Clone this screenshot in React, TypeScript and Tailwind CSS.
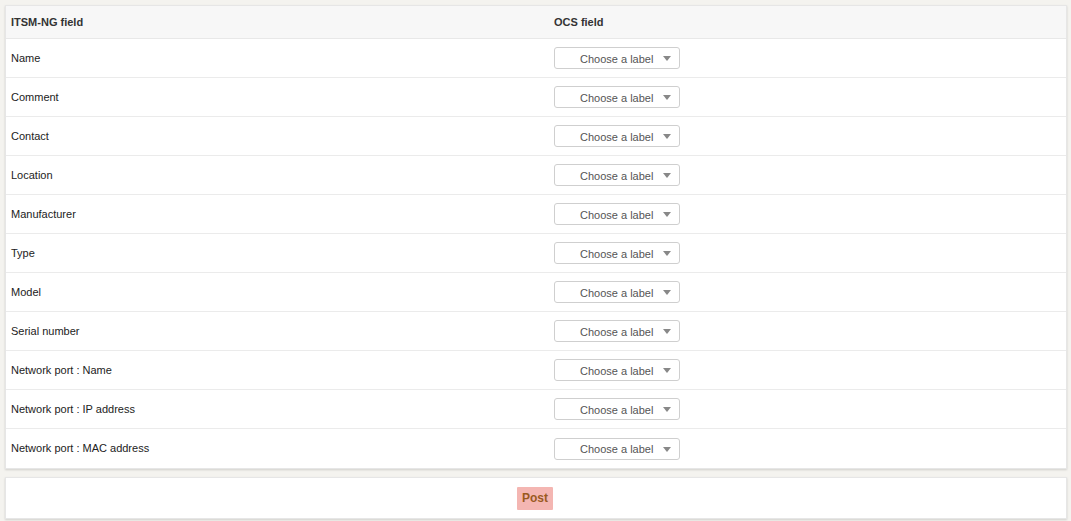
import React from "react";

const fields = [
  "Name",
  "Comment",
  "Contact",
  "Location",
  "Manufacturer",
  "Type",
  "Model",
  "Serial number",
  "Network port : Name",
  "Network port : IP address",
  "Network port : MAC address",
];

const LabelSelect = () => (
  <div className="relative flex h-[22px] w-[126px] items-center rounded-[3px] border border-[#cfcfcf] bg-white pl-[25px] pt-[2px] text-[11px] text-[#555]">
    <span>Choose a label</span>
    <span className="absolute right-[8px] top-[8px] h-0 w-0 border-x-[4px] border-t-[5px] border-x-transparent border-t-[#888]" />
  </div>
);

export default function App() {
  return (
    <div
      className="min-h-[521px] bg-[#f4f3ef] px-[5px] pt-[5px] text-[#222]"
      style={{ fontFamily: '"Liberation Sans", Arial, sans-serif' }}
    >
      <div className="w-[1062px] border border-[#e6e6e6] bg-white shadow-[0_1px_2px_rgba(0,0,0,0.15)]">
        <div className="grid h-[33px] grid-cols-[543px_1fr] items-center border-b border-[#e8e8e8] bg-[#f7f7f7] text-[11px] font-bold text-[#333]">
          <div className="pl-[5px]">ITSM-NG field</div>
          <div className="pl-[5px]">OCS field</div>
        </div>
        {fields.map((f, i) => (
          <div
            key={f}
            className={`grid h-[39px] grid-cols-[543px_1fr] items-center text-[11px] ${i < fields.length - 1 ? "border-b border-[#ebebeb]" : ""}`}
          >
            <div className="pl-[5px]">{f}</div>
            <div className="pl-[5px]">
              <LabelSelect />
            </div>
          </div>
        ))}
      </div>
      <div className="mt-[8px] flex h-[42px] w-[1062px] items-center justify-center border border-[#e6e6e6] bg-white shadow-[0_1px_2px_rgba(0,0,0,0.15)]">
        <button className="mr-[2px] h-[23px] w-[36px] rounded-[1px] bg-[#f4b6b2] text-[12px] font-bold text-[#9a5a1f]">
          Post
        </button>
      </div>
    </div>
  );
}
